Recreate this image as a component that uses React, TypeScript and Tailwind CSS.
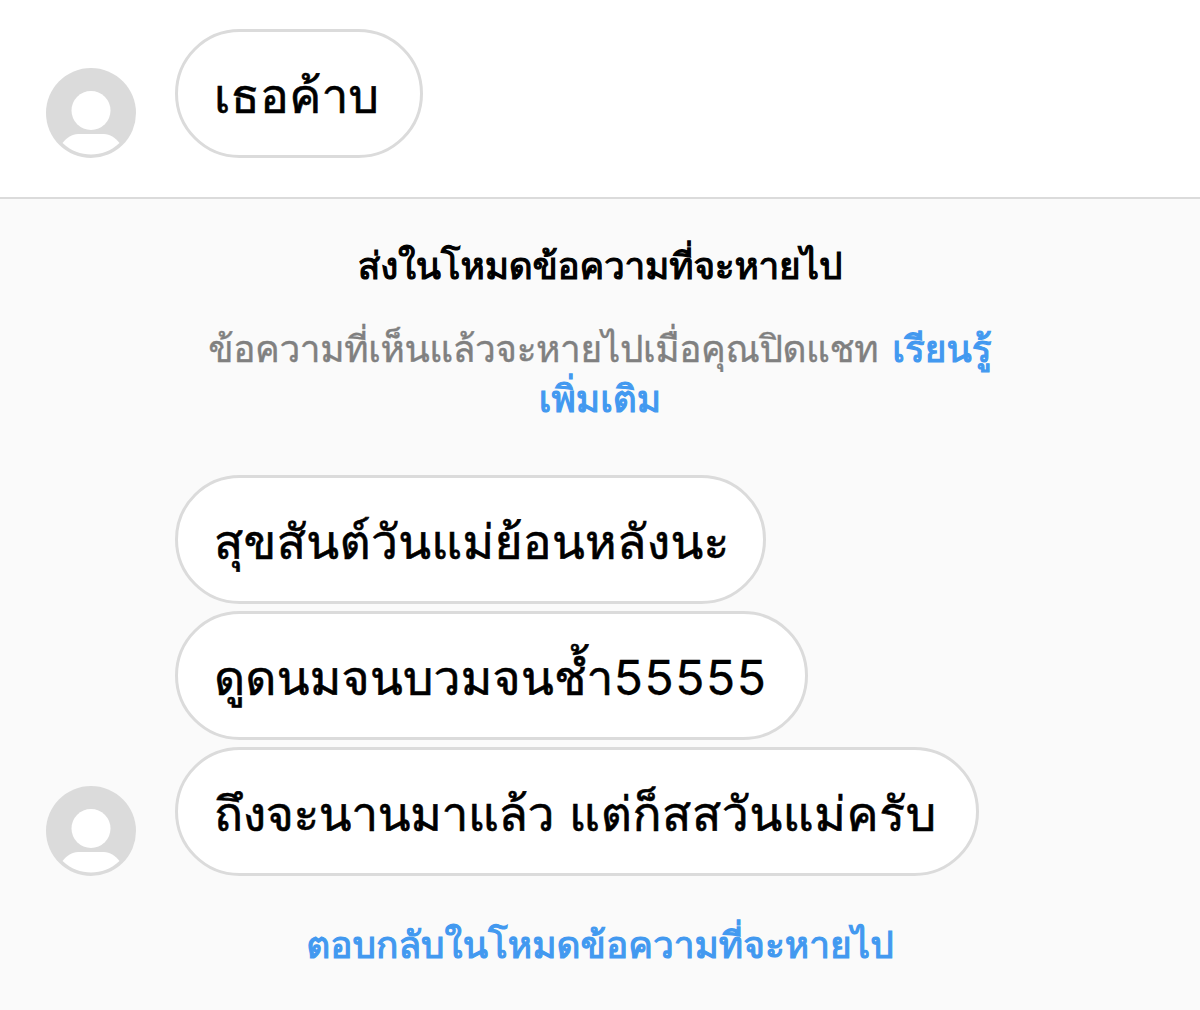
import clsx from "clsx";
import type { ReactNode } from "react";

function Avatar() {
  return (
    <svg viewBox="0 0 90 90" className="mr-[39px] h-[90px] w-[90px] shrink-0">
      <circle cx="45" cy="45" r="45" fill="#dbdbdb" />
      <circle cx="45" cy="42.500" r="19.5" fill="#fff" />
      <path
        d="M16.500 75C21 69.500 26 66 32 66H58C64 66 69 69.500 73.500 75C65 83 55 86.500 45 86.500C35 86.500 25 83 16.500 75Z"
        fill="#fff"
      />
    </svg>
  );
}

interface BubbleProps {
  children: ReactNode;
  className: string;
}

function Bubble({ children, className }: BubbleProps) {
  return (
    <p
      className={clsx(
        "flex h-[129px] items-center rounded-full border-3 border-[#dbdbdb] bg-white pt-[5px] pl-[36px] text-[48px] leading-[64px] whitespace-pre text-black [-webkit-text-stroke:0.6px]",
        className
      )}
    >
      {children}
    </p>
  );
}

export default function App() {
  return (
    <main className="flex h-[1010px] w-[1200px] flex-col overflow-hidden bg-white font-['Inter','Loma',sans-serif]">
      <section className="flex h-[197px] shrink-0 items-end pb-[39px] pl-[46px]">
        <Avatar />
        <Bubble className="w-[248px] tracking-[0.2px]">เธอค้าบ</Bubble>
      </section>

      <section className="flex flex-1 flex-col border-t-2 border-[#dbdbdb] bg-[#fafafa]">
        <h2 className="mt-[42px] text-center text-[37px] leading-[50px] tracking-[-0.25px] text-black [-webkit-text-stroke:1.2px]">
          ส่งในโหมดข้อความที่จะหายไป
        </h2>
        <p className="mt-[33px] text-center text-[37px] leading-[50px] tracking-[-0.4px] text-[#808080] [-webkit-text-stroke:0.4px]">
          ข้อความที่เห็นแล้วจะหายไปเมื่อคุณปิดแชท
          <a className="ml-[14px] tracking-normal text-[#4299f0] [-webkit-text-stroke:1.2px]">
            เรียนรู้
            <br />
            เพิ่มเติม
          </a>
        </p>

        <div className="mt-[51px] flex items-end pl-[46px]">
          <Avatar />
          <div className="flex flex-col gap-[7px]">
            <Bubble className="w-[591px] tracking-[0.3px]">สุขสันต์วันแม่ย้อนหลังนะ</Bubble>
            <Bubble className="w-[633px] tracking-[0.2px]">
              ดูดนมจนบวมจนช้ำ
              <span className="tracking-[1.6px] [-webkit-text-stroke:0.3px]">55555</span>
            </Bubble>
            <Bubble className="w-[804px]">
              <span className="tracking-[-0.4px]">ถึงจะนานมาแล้ว</span>
              <span className="tracking-[1.5px]"> </span>
              <span className="tracking-[0.6px]">แต่ก็สสวันแม่ครับ</span>
            </Bubble>
          </div>
        </div>

        <button className="mt-[44px] text-center text-[37px] leading-[50px] text-[#4299f0] [-webkit-text-stroke:1.2px]">
          ตอบกลับในโหมดข้อความที่จะหายไป
        </button>
      </section>
    </main>
  );
}
